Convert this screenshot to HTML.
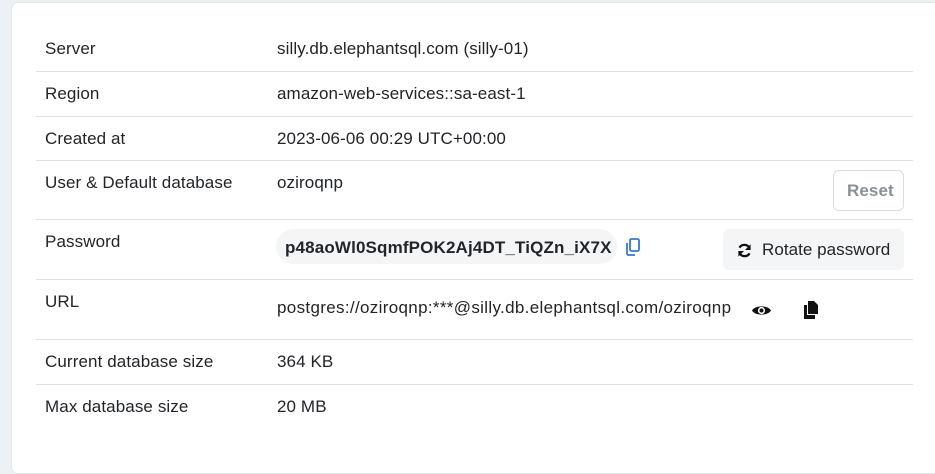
<!DOCTYPE html>
<html><head><style>
body{margin:0;width:935px;height:451px;background:#eef1f4;font-family:"Liberation Sans",sans-serif;color:#212529;overflow:hidden;position:relative}
.card{position:absolute;left:11px;top:2px;width:940px;height:470px;background:#fff;border:1px solid #e3e6ea;border-radius:7px}
.t{position:absolute;font-size:17px;white-space:nowrap;letter-spacing:0.1px}
.l{left:45px}.v{left:277px}
.hr{position:absolute;left:36px;width:877px;height:1px;background:#dee2e6}
.pill{position:absolute;left:276px;top:229px;width:341px;height:35px;border-radius:18px;background:#f3f5f7}
.btn{position:absolute;border-radius:6px}
</style></head><body>
<div class="card"></div>
<div class="t l" style="top:39px">Server</div><div class="t v" style="top:39px">silly.db.elephantsql.com (silly-01)</div>
<div class="hr" style="top:71px"></div>
<div class="t l" style="top:84px">Region</div><div class="t v" style="top:84px">amazon-web-services::sa-east-1</div>
<div class="hr" style="top:116px"></div>
<div class="t l" style="top:129px">Created at</div><div class="t v" style="top:129px">2023-06-06 00:29 UTC+00:00</div>
<div class="hr" style="top:160px"></div>
<div class="t l" style="top:173px">User &amp; Default database</div><div class="t v" style="top:173px">oziroqnp</div>
<div class="btn" style="left:833px;top:170px;width:71px;height:41px;border:1px solid #d5dde5;box-sizing:border-box"></div>
<div class="t" style="left:847px;top:181px;color:#8a9099;font-weight:bold">Reset</div>
<div class="hr" style="top:219px"></div>
<div class="t l" style="top:232px">Password</div>
<div class="pill"></div>
<div class="t" style="left:285px;top:238px;font-weight:bold;font-size:17px;letter-spacing:0.15px">p48aoWl0SqmfPOK2Aj4DT_TiQZn_iX7X</div>
<svg style="position:absolute;left:625px;top:238px" width="16" height="18" viewBox="0 0 16 18"><rect x="5" y="1" width="9" height="12" rx="1.5" fill="none" stroke="#3a78c9" stroke-width="1.8"/><path d="M2 5v10.5a1.5 1.5 0 0 0 1.5 1.5H10" fill="none" stroke="#3a78c9" stroke-width="1.8"/></svg>
<div class="btn" style="left:723px;top:229px;width:181px;height:41px;background:#f3f5f7"></div>
<svg style="position:absolute;left:737px;top:243px" width="15" height="15" viewBox="0 0 16 16"><path d="M13.5 6A6 6 0 0 0 2.6 5M2.5 10a6 6 0 0 0 10.9 1" fill="none" stroke="#111" stroke-width="2.4"/><path d="M14.5 1.5v6h-6z M1.5 14.5v-6h6z" fill="#111"/></svg>
<div class="t" style="left:762px;top:240px;letter-spacing:0.05px">Rotate password</div>
<div class="hr" style="top:279px"></div>
<div class="t l" style="top:292px">URL</div>
<div class="t v" style="top:298px;letter-spacing:0.33px">postgres://oziroqnp:***@silly.db.elephantsql.com/oziroqnp</div>
<svg style="position:absolute;left:751px;top:303px" width="21" height="15" viewBox="0 0 21 15"><path d="M1 7.5C4 2 17 2 20 7.5C17 13 4 13 1 7.5z" fill="#111"/><circle cx="10.5" cy="7.5" r="3.6" fill="#fff"/><circle cx="10.5" cy="7.5" r="2" fill="#111"/></svg>
<svg style="position:absolute;left:803px;top:301px" width="16" height="18" viewBox="0 0 16 18"><path d="M5 0h6l4 4v9H5z" fill="#111"/><path d="M1 4h3v10h8v4H1z" fill="#111"/></svg>
<div class="hr" style="top:339px"></div>
<div class="t l" style="top:352px">Current database size</div><div class="t v" style="top:352px">364 KB</div>
<div class="hr" style="top:384px"></div>
<div class="t l" style="top:397px">Max database size</div><div class="t v" style="top:397px">20 MB</div>
</body></html>
